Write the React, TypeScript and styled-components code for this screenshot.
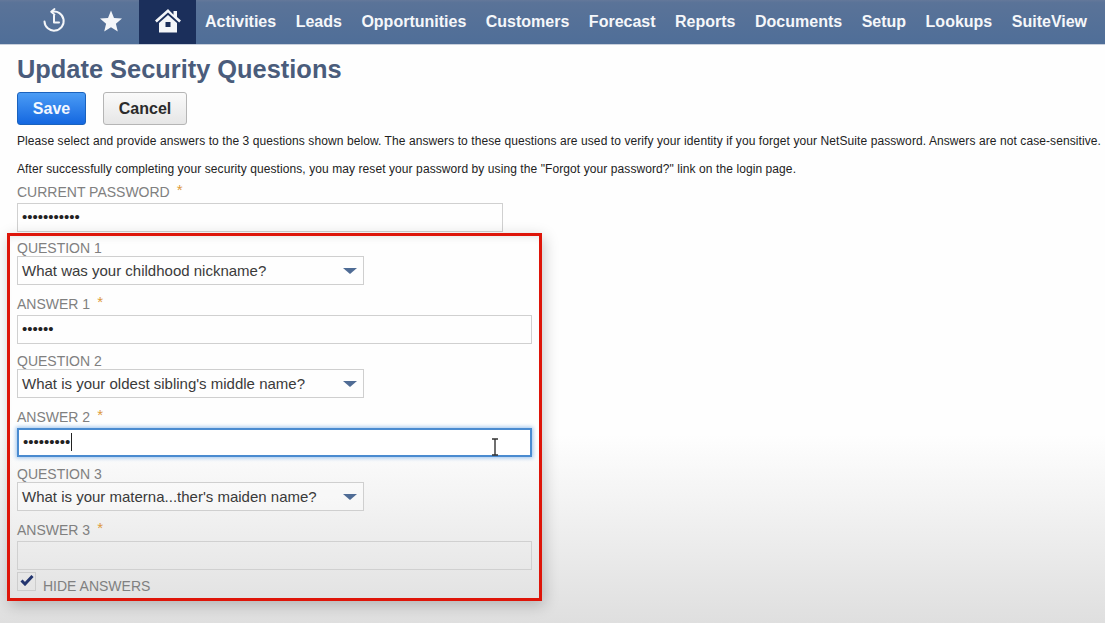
import React from "react";
import styled, { createGlobalStyle } from "styled-components";

const Global = createGlobalStyle`
  html, body { margin: 0; padding: 0; }
  body {
    width: 1105px; height: 623px; overflow: hidden;
    font-family: "Liberation Sans", Arial, sans-serif;
    background: linear-gradient(180deg, #fefefe 0, #fefefe 435px, #f0f0f0 520px, #dfdfdf 623px);
  }
`;
const Page = styled.div`width: 1105px; height: 623px; overflow: hidden;`;
const Nav = styled.nav`
  height: 45px; display: flex; align-items: stretch; padding-left: 25px;
  background: linear-gradient(180deg, #64789a 0, #5a7398 6%, #4f6e98 100%);
  border-bottom: 1px solid #c9d0dc; box-sizing: border-box;
`;
const IconCell = styled.div<{ $active?: boolean; $w: number }>`
  width: ${p => p.$w}px; box-sizing: border-box; padding-bottom: 3px; display: flex; align-items: center; justify-content: center;
  background: ${p => (p.$active ? "#1b2f5b" : "transparent")};
  color: #f4f6f9;
`;
const NavItems = styled.div`display: flex; align-items: center; gap: 19.5px; padding: 0 0 1px 9px;`;
const NavItem = styled.span`color: #f5f7fa; font-size: 16px; font-weight: 700; letter-spacing: 0; white-space: nowrap;`;
const Content = styled.main`padding: 7px 0 0 17px;`;
const Title = styled.h1`margin: 0; font-size: 25.4px; line-height: 34px; font-weight: 700; color: #4a5c7b; white-space: nowrap;`;
const Buttons = styled.div`display: flex; gap: 17px; margin-top: 6px;`;
const Button = styled.button<{ $primary?: boolean }>`
  height: 33px; box-sizing: border-box; padding: 0; font: 700 16px "Liberation Sans", Arial, sans-serif;
  border-radius: 3px; width: ${p => (p.$primary ? "69px" : "84px")};
  color: ${p => (p.$primary ? "#f4f8ff" : "#2b2b2b")};
  border: 1px solid ${p => (p.$primary ? "#1a62bd" : "#b5b5b5")};
  background: ${p => (p.$primary ? "linear-gradient(180deg,#4b9cf5,#1467e0)" : "linear-gradient(180deg,#fafafa,#e6e6e6)")};
`;
const Note = styled.p<{ $top: number }>`
  margin: ${p => p.$top}px 0 0; font-size: 12px; line-height: 14px; color: #222; white-space: nowrap; letter-spacing: .085px;
`;
const Label = styled.div`
  font-size: 14px; line-height: 16px; color: #808080; text-transform: uppercase; white-space: nowrap;
`;
const Star = styled.span`color: #dd9a3c; margin-left: 7px; font-size: 15px; position: relative; top: -2px;`;
const TextBox = styled.div<{ $w: number; $focus?: boolean; $empty?: boolean }>`
  box-sizing: border-box; width: ${p => p.$w}px; height: 29px; display: flex; align-items: center; padding: 0 0 2px 4px;
  border: ${p => (p.$focus ? "2px solid #4a8bd0" : "1px solid #d0d0d0")};
  box-shadow: ${p => (p.$focus ? "0 0 4px 1px #9cc3ec" : "none")};
  background: ${p => (p.$focus ? "#fff" : p.$empty ? "transparent" : "#fefefe")};
  color: #222; font-size: 15px; white-space: nowrap;
`;
const Caret = styled.span`display: inline-block; width: 1px; height: 18px; background: #222; margin-left: 1px;`;
const Select = styled.div`
  box-sizing: border-box; width: 347px; height: 29px; display: flex; align-items: center; justify-content: space-between;
  padding: 0 6px 0 4px; border: 1px solid #cfcfcf; color: #3a3a3a; font-size: 15px; background: rgba(255,255,255,.35);
`;
const Arrow = styled.span`width: 0; height: 0; border-left: 7px solid transparent; border-right: 7px solid transparent; border-top: 6px solid #4f6c95;`;
const Highlight = styled.section`
  position: relative; box-sizing: border-box; width: 535px; height: 368px; margin: 1px 0 0 -10px; padding: 4px 0 0 7px;
  border: 3px solid #de1509; box-shadow: 2px 4px 14px rgba(0,0,0,.22), inset 0 6px 8px -6px rgba(0,0,0,.12);
`;
const Field = styled.div<{ $top: number }>`margin-top: ${p => p.$top}px;`;
const LabelGap = styled.div`height: 3px;`;
const CheckRow = styled.div`display: flex; align-items: flex-start; gap: 7px; margin-top: 2px;`;
const Check = styled.div`
  box-sizing: border-box; width: 19px; height: 19px; border: 1px solid #cdcdcd; display: flex; align-items: flex-start; justify-content: center; padding-top: 2px;
`;
const CheckLabel = styled(Label)`margin-top: 6px;`;
const Cursor = styled.svg`position: absolute; left: 480px; top: 202px;`;

const dots = (n: number) => "•".repeat(n);

const Q = ({ q, a, label, focus, n }: { q: string; a: number; label: number; focus?: boolean; n: number }) => (
  <>
    <Field $top={n === 1 ? 0 : 9}>
      <Label>Question {label}</Label>
      <Select>{q}<Arrow /></Select>
    </Field>
    <Field $top={11}>
      <Label>Answer {label}<Star>*</Star></Label>
      <LabelGap />
      <TextBox $w={515} $focus={focus} $empty={a === 0}>
        {dots(a)}{focus && <Caret />}
      </TextBox>
    </Field>
  </>
);

export default function App() {
  return (
    <Page>
      <Global />
      <Nav>
        <IconCell $w={57}>
          <svg width="26" height="26" viewBox="0 0 26 26" fill="none" stroke="currentColor" strokeWidth="2" strokeLinecap="round" strokeLinejoin="round">
            <path d="M11 3.7A9.6 9.6 0 1 1 3.5 13.5" />
            <path d="M13.5 1L10.2 3.8l3.3 2.8" strokeWidth="1.8" />
            <path d="M13 7.5v7h5" />
          </svg>
        </IconCell>
        <IconCell $w={57}>
          <svg width="24" height="24" viewBox="0 0 24 24" fill="currentColor">
            <path d="M12 1.5l3 7.4 8 .6-6.1 5.2 1.9 7.8L12 18.3l-6.8 4.2 1.9-7.8L1 9.5l8-.6z" />
          </svg>
        </IconCell>
        <IconCell $w={57} $active>
          <svg width="28" height="26" viewBox="0 0 28 26" fill="currentColor">
            <path d="M14 1L1 12.5l1.8 2L14 4.6l11.2 9.9 1.8-2-4-3.5V3h-3.5v3.8z" />
            <path fillRule="evenodd" d="M14 7L5 15v9.5h18V15zM11.5 14h5v5h-5z" />
          </svg>
        </IconCell>
        <NavItems>
          {["Activities", "Leads", "Opportunities", "Customers", "Forecast", "Reports", "Documents", "Setup", "Lookups", "SuiteView"].map(t => (
            <NavItem key={t}>{t}</NavItem>
          ))}
        </NavItems>
      </Nav>
      <Content>
        <Title>Update Security Questions</Title>
        <Buttons>
          <Button $primary>Save</Button>
          <Button>Cancel</Button>
        </Buttons>
        <Note $top={9}>Please select and provide answers to the 3 questions shown below. The answers to these questions are used to verify your identity if you forget your NetSuite password. Answers are not case-sensitive.</Note>
        <Note $top={14}>After successfully completing your security questions, you may reset your password by using the "Forgot your password?" link on the login page.</Note>
        <Field $top={8}>
          <Label>Current Password<Star>*</Star></Label>
          <LabelGap />
          <TextBox $w={486}>{dots(11)}</TextBox>
        </Field>
        <Highlight>
          <Q n={1} label={1} q="What was your childhood nickname?" a={6} />
          <Q n={2} label={2} q="What is your oldest sibling's middle name?" a={9} focus />
          <Q n={3} label={3} q="What is your materna...ther's maiden name?" a={0} />
          <CheckRow>
            <Check>
              <svg width="14" height="11" viewBox="0 0 14 11" fill="none" stroke="#23356f" strokeWidth="3">
                <path d="M1.5 5.5l3.5 3.5 7.5-8" />
              </svg>
            </Check>
            <CheckLabel>Hide Answers</CheckLabel>
          </CheckRow>
          <Cursor width="10" height="18" viewBox="0 0 10 18" fill="none" stroke="#333" strokeWidth="1.4">
            <path d="M2 1h6M5 1v16M2 17h6" />
          </Cursor>
        </Highlight>
      </Content>
    </Page>
  );
}
